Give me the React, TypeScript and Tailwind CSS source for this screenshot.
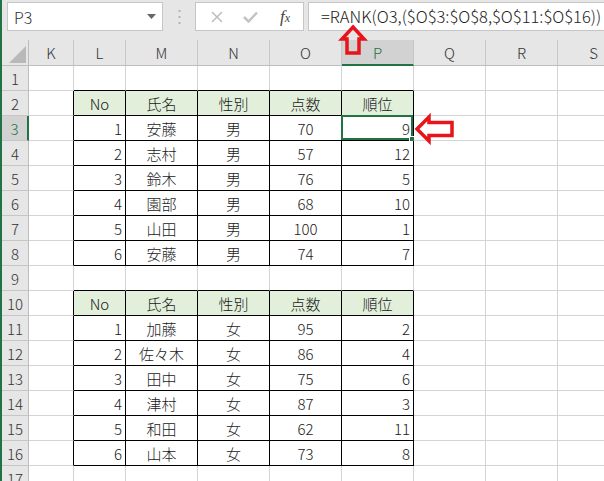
import React from "react";

type Row = (string | number)[];

const t1: Row[] = [
  [1, "安藤", "男", 70, 9],
  [2, "志村", "男", 57, 12],
  [3, "鈴木", "男", 76, 5],
  [4, "園部", "男", 68, 10],
  [5, "山田", "男", 100, 1],
  [6, "安藤", "男", 74, 7],
];
const t2: Row[] = [
  [1, "加藤", "女", 95, 2],
  [2, "佐々木", "女", 86, 4],
  [3, "田中", "女", 75, 6],
  [4, "津村", "女", 87, 3],
  [5, "和田", "女", 62, 11],
  [6, "山本", "女", 73, 8],
];
const heads = ["No", "氏名", "性別", "点数", "順位"];
const colNames = ["K", "L", "M", "N", "O", "P", "Q", "R", "S"];

function isTableRow(r: number) {
  return (r >= 2 && r <= 8) || (r >= 10 && r <= 16);
}

function cellContent(r: number, c: number): { text: string; align: string; head: boolean } | null {
  if (c < 1 || c > 5) return null;
  const ci = c - 1;
  if (r === 2 || r === 10) return { text: heads[ci], align: "justify-center", head: true };
  let row: Row | undefined;
  if (r >= 3 && r <= 8) row = t1[r - 3];
  if (r >= 11 && r <= 16) row = t2[r - 11];
  if (!row) return null;
  const align = ci === 0 || ci === 4 ? "justify-end pr-[3px]" : "justify-center";
  return { text: String(row[ci]), align, head: false };
}

function Cell({ r, c }: { r: number; c: number }) {
  const inTableCol = c >= 1 && c <= 5;
  const rightBlack = c >= 0 && c <= 5 && isTableRow(r);
  const bottomBlack = inTableCol && (isTableRow(r) || r === 1 || r === 9);
  const rb = rightBlack ? "border-r-black" : "border-r-[#d4d4d4]";
  const bb = bottomBlack ? "border-b-black" : "border-b-[#d4d4d4]";
  const content = cellContent(r, c);
  const bg = content && content.head ? "bg-[#e2efda]" : "bg-white";
  const selected = r === 3 && c === 5;
  return (
    <div className={`relative flex items-center h-[25px] border-r border-b ${rb} ${bb} ${bg} ${content ? content.align : ""}`}>
      {content && (
        <span className="text-[15px] font-light leading-none text-[#1a1a1a] whitespace-nowrap">{content.text}</span>
      )}
      {selected && (
        <div className="absolute -left-[1px] -top-[1px] right-0 bottom-0 border-2 border-[#217346] pointer-events-none">
          <div className="absolute -right-[4px] -bottom-[4px] w-[6px] h-[6px] bg-[#217346] border border-white" />
        </div>
      )}
    </div>
  );
}

export default function App() {
  const rows = Array.from({ length: 17 }, (_, i) => i + 1);
  return (
    <div
      className="relative w-[604px] h-[481px] overflow-hidden bg-white border-l-2 border-[#217346]"
      style={{ fontFamily: '"Noto Sans CJK JP", "Noto Sans", sans-serif' }}
    >
      {/* formula bar */}
      <div className="h-[40px] bg-[#e6e6e6] relative">
        <div className="flex items-start pt-[2px] pl-[5px]">
          <div className="w-[156px] h-[29px] bg-white border border-[#c6c6c6] flex items-center justify-between pl-[6px] pr-[6px]">
            <span className="text-[16px] text-[#333] font-light leading-none">P3</span>
            <svg width="9" height="5" viewBox="0 0 9 5"><path d="M0 0 H9 L4.5 5 Z" fill="#666" /></svg>
          </div>
          <div className="w-[32px] h-[29px] flex items-center justify-center">
            <svg width="3" height="14" viewBox="0 0 3 14">
              <rect x="0.5" y="0" width="2" height="2" fill="#b4b4b4" />
              <rect x="0.5" y="6" width="2" height="2" fill="#b4b4b4" />
              <rect x="0.5" y="12" width="2" height="2" fill="#b4b4b4" />
            </svg>
          </div>
          <div className="w-[109px] h-[29px] bg-white border border-[#c6c6c6] flex items-center pl-[15px]">
            <svg width="12" height="12" viewBox="0 0 12 12"><path d="M1 1 L11 11 M11 1 L1 11" stroke="#bdbdbd" strokeWidth="1.5" /></svg>
            <svg className="ml-[20px]" width="15" height="12" viewBox="0 0 15 12"><path d="M1 6 L5.5 10.5 L14 1.5" stroke="#c4c4c4" strokeWidth="2.5" fill="none" /></svg>
            <span className="ml-[22px] text-[17px] italic text-[#444] leading-none" style={{ fontFamily: '"Liberation Serif", serif' }}>f<span className="text-[12px]">x</span></span>
          </div>
          <div className="ml-[4px] flex-1 h-[29px] bg-white border border-[#c6c6c6] border-r-0 flex items-center pl-[12px]">
            <span className="text-[16.5px] font-light text-[#222] leading-none whitespace-nowrap">
              =RANK(O3,($O$3:$O$8,$O$11:$O$16))
            </span>
          </div>
        </div>
      </div>

      {/* grid */}
      <div className="grid grid-cols-[27px_45px_52px_72px_72px_72px_72px_72px_72px_72px]">
        <div className="h-[26px] bg-[#e6e6e6] border-r border-b border-[#bdbdbd] flex items-end justify-end pr-[2px] pb-[2px]">
          <svg width="17" height="17" viewBox="0 0 17 17"><path d="M17 0 V17 H0 Z" fill="#b9b9b9" /></svg>
        </div>
        {colNames.map((n) => {
          const sel = n === "P";
          return (
            <div
              key={n}
              className={`h-[26px] flex items-center justify-center text-[15px] font-light leading-none ${sel ? "bg-[#d2d2d2] text-[#217346] border-b-2 border-b-[#217346]" : "bg-[#e6e6e6] text-[#333] border-b border-b-[#bdbdbd]"} border-r border-r-[#c6c6c6]`}
            >
              {n}
            </div>
          );
        })}
        {rows.map((r) => (
          <React.Fragment key={r}>
            <div
              className={`h-[25px] flex items-center justify-center text-[15px] font-light leading-none border-b border-b-[#c6c6c6] ${r === 3 ? "bg-[#d2d2d2] text-[#217346] border-r-2 border-r-[#217346]" : "bg-[#e6e6e6] text-[#333] border-r border-r-[#bdbdbd]"}`}
            >
              {r}
            </div>
            {colNames.map((_, c) => (
              <Cell key={c} r={r} c={c} />
            ))}
          </React.Fragment>
        ))}
      </div>

      {/* red arrows */}
      <svg className="absolute left-0 top-0 pointer-events-none" width="604" height="481" viewBox="0 0 604 481">
        <g transform="translate(-2,0)">
          <polygon points="353,27 364,39 359,39 359,53 347,53 347,39 342,39" fill="none" stroke="#e8141c" strokeWidth="3.5" strokeLinejoin="miter" />
          <polygon points="417,129 429,117 429,122.5 452,122.5 452,135.5 429,135.5 429,141" fill="none" stroke="#e8141c" strokeWidth="3.5" strokeLinejoin="miter" />
        </g>
      </svg>
    </div>
  );
}
